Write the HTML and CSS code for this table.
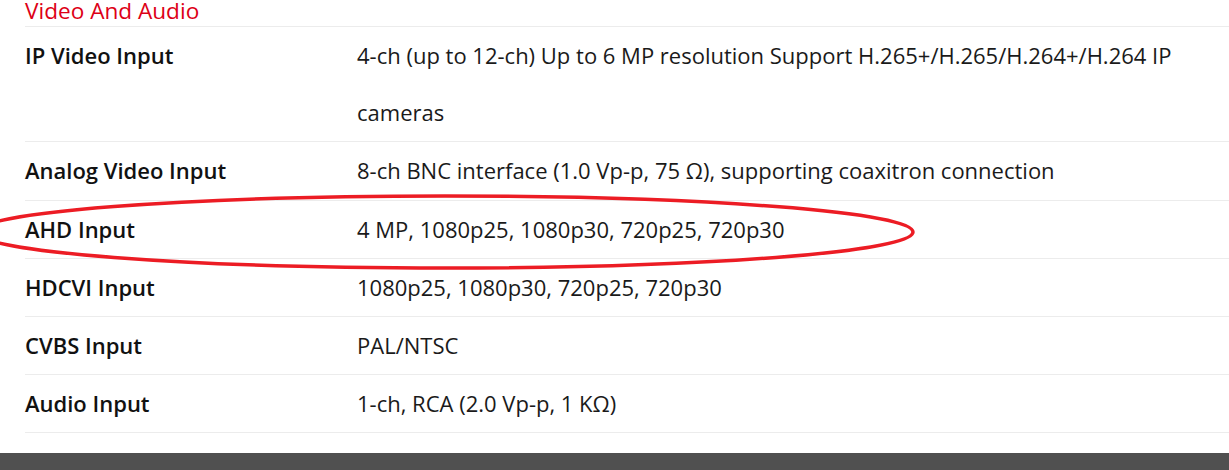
FILE: index.html
```html
<!DOCTYPE html>
<html>
<head>
<meta charset="utf-8">
<link rel="stylesheet" href="styles.css">
</head>
<body>
<div class="page">
  <section class="specs">
    <h2 class="section-title">Video And Audio</h2>
    <table class="spec-table">
      <tbody>
        <tr><th>IP Video Input</th><td>4-ch (up to 12-ch) Up to 6 MP resolution Support H.265+/H.265/H.264+/H.264 IP cameras</td></tr>
        <tr><th>Analog Video Input</th><td>8-ch BNC interface (1.0 Vp-p, 75 Ω), supporting coaxitron connection</td></tr>
        <tr><th>AHD Input</th><td>4 MP, 1080p25, 1080p30, 720p25, 720p30</td></tr>
        <tr><th>HDCVI Input</th><td>1080p25, 1080p30, 720p25, 720p30</td></tr>
        <tr><th>CVBS Input</th><td>PAL/NTSC</td></tr>
        <tr><th>Audio Input</th><td>1-ch, RCA (2.0 Vp-p, 1 KΩ)</td></tr>
      </tbody>
    </table>
    <svg class="annotation" width="1229" height="120" viewBox="0 0 1229 120" xmlns="http://www.w3.org/2000/svg">
      <ellipse cx="445" cy="52" rx="468" ry="36" fill="none" stroke="#ec1c24" stroke-width="3.5"/>
    </svg>
  </section>
  <footer class="footer-bar"></footer>
</div>
</body>
</html>
```
FILE: styles.css
```css
html, body {
  margin: 0;
  padding: 0;
  background: #fff;
}
.page {
  width: 1229px;
  height: 470px;
  overflow: hidden;
  display: flex;
  flex-direction: column;
}
.specs {
  position: relative;
  padding-left: 25px;
  font-family: "Open Sans", "Liberation Sans", sans-serif;
  font-size: 22px;
  color: #1a1a1a;
}
.section-title {
  margin: -4px 0 0 0;
  font-size: 22.6px;
  font-weight: 400;
  line-height: 30px;
  color: #dd0016;
  border-bottom: 1px solid #ececec;
}
.spec-table {
  width: 100%;
  border-collapse: collapse;
}
.spec-table th,
.spec-table td {
  padding: 0;
  line-height: 57.2px;
  vertical-align: top;
  text-align: left;
  border-bottom: 1px solid #ececec;
}
.spec-table th {
  width: 332px;
  font-weight: 600;
  color: #111;
}
.spec-table td {
  font-weight: 400;
}
.annotation {
  position: absolute;
  left: 0;
  top: 180px;
  pointer-events: none;
}
.footer-bar {
  margin-top: 20px;
  height: 17px;
  background: #505050;
}
```
